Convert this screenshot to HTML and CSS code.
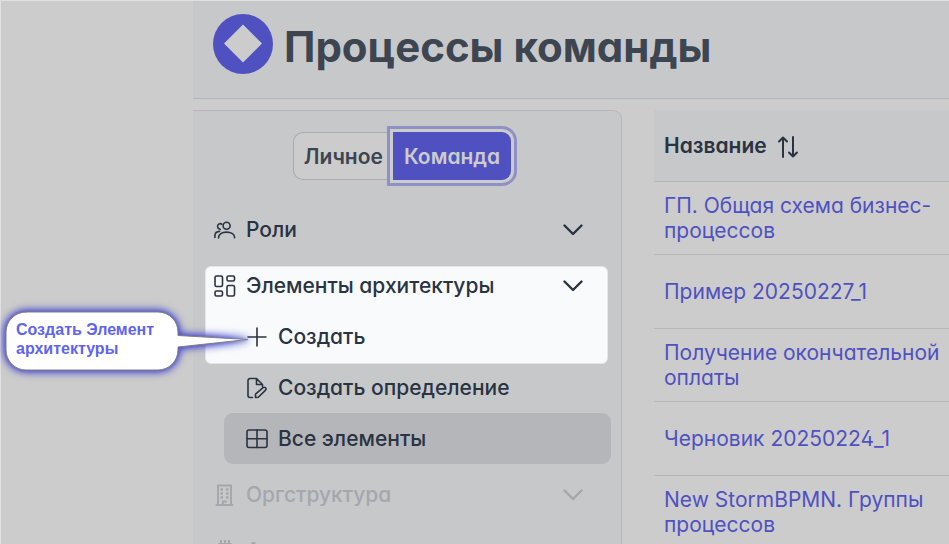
FILE: index.html
```html
<!DOCTYPE html>
<html lang="ru">
<head>
    <meta charset="UTF-8">
    <meta name="viewport" content="width=device-width, initial-scale=1.0">
    <title>Процессы команды</title>
    <link rel="stylesheet" href="styles.css">
</head>
<body>
    <div class="page">
        <header class="header">
            <svg class="logo" viewBox="0 0 60 60" aria-hidden="true">
                <circle cx="30" cy="30" r="30" fill="#4f51c1"/>
                <path d="M30 10.5 49 29.5 30 48.5 11 29.5Z" fill="#cccccc"/>
            </svg>
            <h1>Процессы команды</h1>
        </header>
        <main>
            <aside class="sidebar">
                <div class="switch">
                    <button type="button" class="switch-button">Личное</button>
                    <button type="button" class="switch-button active">Команда</button>
                </div>
                <nav class="menu">
                    <section class="group">
                        <a class="item" href="#roles">
                            <svg class="icon" viewBox="0 0 22 22"><circle cx="12.6" cy="6.8" r="3.5"/><path d="M4.6 19v-.6c0-3.2 3.2-5.3 8-5.3s8 2.1 8 5.3v.4M8 5.2C5.6 3.8 3.2 5.6 3.6 8c.3 1.5 1.4 2.3 2.6 2.4M.9 18.5v-2.3c.2-2.4 2.1-3.6 4.7-3.8"/></svg>
                            <span>Роли</span>
                            <svg class="chevron" viewBox="0 0 20 12"><path d="m1.5 1.5 8.5 8.5 8.5-8.5"/></svg>
                        </a>
                    </section>
                    <section class="group">
                        <div class="spotlight"></div>
                        <a class="item" href="#elements">
                            <svg class="icon" viewBox="0 0 22 22"><rect x="1" y="1" width="7.5" height="10.5" rx="1.5"/><rect x="13" y="1" width="7.5" height="5" rx="1.5"/><rect x="1" y="16" width="7.5" height="5" rx="1.5"/><rect x="13" y="10.5" width="7.5" height="10.5" rx="1.5"/></svg>
                            <span>Элементы архитектуры</span>
                            <svg class="chevron" viewBox="0 0 20 12"><path d="m1.5 1.5 8.5 8.5 8.5-8.5"/></svg>
                        </a>
                        <div class="submenu">
                            <a class="item" href="#create">
                                <svg class="icon" viewBox="0 0 22 22"><path d="M11 2v18M2 11h18"/></svg>
                                <span>Создать</span>
                            </a>
                            <a class="item" href="#define">
                                <svg class="icon" viewBox="0 0 22 22"><path d="M6.5 20.5H4A2 2 0 0 1 2 18.5v-15A2 2 0 0 1 4 1.5h6.500l6 6v2M10.500 1.500v6h6M9.500 20.500v-3.300l7.600-6.500c1.800-1.300 3.800.6 2.500 2.400l-7.300 7.200z"/></svg>
                                <span>Создать определение</span>
                            </a>
                            <a class="item selected" href="#all">
                                <svg class="icon" viewBox="0 0 22 22"><rect x="1" y="2" width="20" height="17.5" rx="2"/><path d="M11 2v17.5M1 10.7h20"/></svg>
                                <span>Все элементы</span>
                            </a>
                        </div>
                    </section>
                    <section class="group disabled">
                        <a class="item" href="#structure">
                            <svg class="icon" viewBox="0 0 22 22"><path d="M4 21V1.500h13V21M2.500 21h16M9 21v-3.500h3"/><path class="windows" d="M6.500 5.500h2.500M12 5.500h2.500M6.500 9.500h2.500M12 9.500h2.500M6.500 13.500h2.500M12 13.500h2.500"/></svg>
                            <span>Оргструктура</span>
                            <svg class="chevron" viewBox="0 0 20 12"><path d="m1.5 1.5 8.5 8.5 8.5-8.5"/></svg>
                        </a>
                    </section>
                    <section class="group disabled">
                        <a class="item" href="#automation">
                            <svg class="icon" viewBox="0 0 22 22"><rect x="4" y="4" width="14" height="14" rx="2"/><path d="M7 0v4M11 0v4M15 0v4M7 18v4M11 18v4M15 18v4M0 7h4M0 11h4M0 15h4M18 7h4M18 11h4M18 15h4"/></svg>
                            <span>А</span>
                        </a>
                    </section>
                </nav>
            </aside>
            <table class="processes">
                <thead>
                    <tr>
                        <th>
                            Название
                            <svg class="sort" viewBox="0 0 22 22"><path d="M6 21V1.5M2 5.5l4-4 4 4M16 1v19.5M12 16.5l4 4 4-4"/></svg>
                        </th>
                    </tr>
                </thead>
                <tbody>
                    <tr><td><a href="#p1">ГП. Общая схема бизнес-процессов</a></td></tr>
                    <tr class="single"><td><a href="#p2">Пример 20250227_1</a></td></tr>
                    <tr><td><a href="#p3">Получение окончательной оплаты</a></td></tr>
                    <tr class="single"><td><a href="#p4">Черновик 20250224_1</a></td></tr>
                    <tr><td><a href="#p5">New StormBPMN. Группы процессов</a></td></tr>
                </tbody>
            </table>
        </main>
    </div>
    <div class="callout">
        <svg class="bubble" viewBox="0 0 260 80" aria-hidden="true">
            <path d="M26 11H158A20 20 0 0 1 178 31V34.5L248 38.5 178 46V49A20 20 0 0 1 158 69H26A20 20 0 0 1 6 49V31A20 20 0 0 1 26 11Z"/>
        </svg>
        <p>Создать Элемент архитектуры</p>
    </div>
</body>
</html>
```

FILE: styles.css
```css
* {
    box-sizing: border-box;
}

html {
    height: 100%;
    overflow: hidden;
}

body {
    height: 100%;
    margin: 0;
    overflow: hidden;
    border-top: 1px solid #e0e0e0;
    border-left: 1px solid #e0e0e0;
    background-color: #cccccc;
    color: #2a3342;
    font-family: Inter, "Noto Sans", sans-serif;
    font-size: 21px;
    font-feature-settings: "cv02", "cv03", "cv04", "cv11";
    line-height: 25px;
}

a {
    color: inherit;
    text-decoration: none;
}

svg {
    flex: none;
    fill: none;
    stroke: currentColor;
    stroke-linecap: round;
    stroke-linejoin: round;
}

.page {
    margin-left: 192px;
}

/* Header */
.header {
    display: flex;
    align-items: center;
    gap: 11px;
    height: 98px;
    padding: 0 20px 12px;
    border-bottom: 1px solid #b5b6ba;
    background-color: #c7c8ca;
    color: #3d4551;
}

.logo {
    width: 60px;
    height: 60px;
    stroke: none;
}

h1 {
    margin: 6px 0 0;
    font-size: 42px;
    font-weight: 700;
    line-height: 50px;
    white-space: nowrap;
}

main {
    display: flex;
    align-items: stretch;
    gap: 32px;
    padding-top: 11px;
}

/* Sidebar */
.sidebar {
    flex: none;
    width: 429px;
    padding: 21px 10px 0 0;
    border-top: 1px solid #b5b6ba;
    border-right: 1px solid #b5b6ba;
    border-top-right-radius: 9px;
    background-color: #c7c8ca;
}

.switch {
    display: flex;
    justify-content: center;
    margin-bottom: 24px;
}

.switch-button {
    height: 48px;
    padding: 0 10px;
    border: 1px solid #a7aab0;
    border-right: none;
    border-radius: 10px 0 0 10px;
    background-color: #cccccc;
    color: #3d4551;
    font: inherit;
    font-weight: 600;
    font-feature-settings: inherit;
    cursor: pointer;
}

.switch-button.active {
    padding: 0 11px;
    border: none;
    border-radius: 0 9px 9px 0;
    background-color: #4f51c1;
    box-shadow: 0 0 0 3px #cccccc, 0 0 0 6px #9090c9;
    color: #cccccc;
}

.menu {
    display: flex;
    flex-direction: column;
    gap: 5px;
}

.group {
    position: relative;
}

.item {
    position: relative;
    display: flex;
    align-items: center;
    gap: 10px;
    height: 51px;
    padding: 0 28px 0 21px;
    border-radius: 9px;
    font-weight: 500;
}

.submenu {
    padding-left: 31px;
}

.submenu .item {
    padding-left: 22px;
}

.selected {
    background-color: #b5b6ba;
}

.disabled {
    color: #a4a7ac;
}

.icon {
    width: 22px;
    height: 22px;
    stroke-width: 1.6px;
}

.windows {
    stroke-linecap: butt;
    stroke-width: 2.4px;
}

.chevron {
    width: 20px;
    height: 12px;
    margin-left: auto;
    stroke-width: 2.4px;
}

/* Bright area behind the highlighted entries */
.spotlight {
    position: absolute;
    top: 6px;
    left: 12px;
    right: 3px;
    height: 98px;
    border: 1px solid #e4e6e8;
    border-radius: 6px;
    background-color: #f8fafc;
}

/* Table */
.processes {
    flex: 1;
    align-self: flex-start;
    border-collapse: separate;
    border-spacing: 0;
}

th,
td {
    padding: 11px 0 11px 10px;
    border-bottom: 1px solid #b6b6b8;
    text-align: left;
}

th {
    height: 72px;
    background-color: #c7c8ca;
    font-weight: 600;
}

td {
    color: #4f51c1;
}

.single {
    height: 74px;
}

.sort {
    width: 22px;
    height: 22px;
    margin-left: 5px;
    stroke-width: 2px;
    vertical-align: middle;
}

.disabled .icon {
    stroke-width: 2px;
}

/* Callout */
.callout {
    position: absolute;
    top: 301px;
    left: 0;
    width: 260px;
    height: 80px;
    color: #6063f1;
    font: bold 16px/19px "Liberation Sans", Arial, sans-serif;
}

.callout p {
    position: relative;
    width: 170px;
    margin: 0;
    padding: 19px 0 0 16px;
}

.bubble {
    position: absolute;
    top: 0;
    left: 0;
    width: 260px;
    height: 80px;
    overflow: visible;
    fill: #ffffff;
    stroke: #808080;
    stroke-width: 1px;
    filter: drop-shadow(0 0 4px #5052cc) drop-shadow(0 0 2px #5052cc);
}
```
